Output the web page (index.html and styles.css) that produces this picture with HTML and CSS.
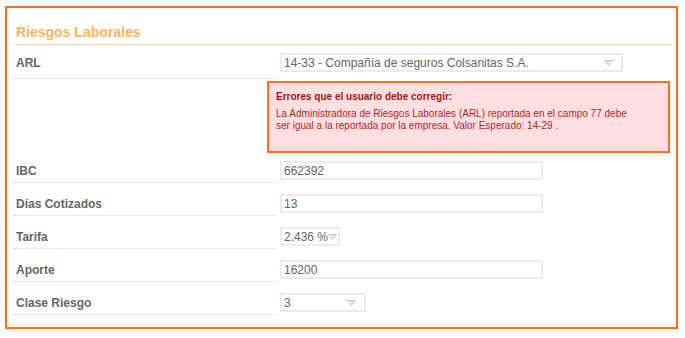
FILE: index.html
```html
<!DOCTYPE html>
<html lang="es">

<head>
  <meta charset="UTF-8">
  <meta name="viewport" content="width=device-width, initial-scale=1.0">
  <title>Riesgos Laborales</title>

  <link rel="stylesheet" href="styles.css">
</head>

<body>
  <div class="panel">
    <h2 class="panel-titulo">Riesgos Laborales</h2>

    <div class="campo campo-primero">
      <div class="etiqueta">ARL</div>
      <div class="valor">
        <div class="caja lista ancho-arl">
          <span>14-33 - Compañía de seguros Colsanitas S.A.</span>
          <svg class="flecha" width="9" height="6" viewBox="0 0 9 6"><polygon points="0.5,0.5 8.5,0.5 4.5,5.5" /></svg>
        </div>
      </div>
    </div>

    <div class="campo-error">
      <div></div>
      <div class="error">
        <div class="error-titulo">Errores que el usuario debe corregir:</div>
        <div class="error-texto">La Administradora de Riesgos Laborales (ARL) reportada en el campo 77 debe ser igual a la reportada por la empresa. Valor Esperado: 14-29 .</div>
      </div>
    </div>

    <div class="campo campo-tras-error">
      <div class="etiqueta">IBC</div>
      <div class="valor">
        <div class="caja ancho-texto">662392</div>
      </div>
    </div>

    <div class="campo">
      <div class="etiqueta">Días Cotizados</div>
      <div class="valor">
        <div class="caja ancho-texto">13</div>
      </div>
    </div>

    <div class="campo">
      <div class="etiqueta">Tarifa</div>
      <div class="valor">
        <div class="caja lista ancho-tarifa">
          <span>2.436 %</span>
          <svg class="flecha flecha-pegada" width="9" height="6" viewBox="0 0 9 6"><polygon points="0.5,0.5 8.5,0.5 4.5,5.5" /></svg>
        </div>
      </div>
    </div>

    <div class="campo">
      <div class="etiqueta">Aporte</div>
      <div class="valor">
        <div class="caja ancho-texto">16200</div>
      </div>
    </div>

    <div class="campo">
      <div class="etiqueta">Clase Riesgo</div>
      <div class="valor">
        <div class="caja lista ancho-clase">
          <span>3</span>
          <svg class="flecha" width="9" height="6" viewBox="0 0 9 6"><polygon points="0.5,0.5 8.5,0.5 4.5,5.5" /></svg>
        </div>
      </div>
    </div>
  </div>
</body>

</html>
```

FILE: styles.css
```css
body {
  font-family: 'Liberation Sans', Arial, sans-serif;
  background-color: #fff;
  margin: 0;
  padding: 6px 0 0 5px;
  color: #666;
}

.panel {
  box-sizing: border-box;
  width: 673px;
  border: 2px solid #f7711e;
  padding: 15px 4px 12px 7px;
}

.panel-titulo {
  margin: 0;
  padding: 0 2px 3px;
  font-size: 14px;
  line-height: 18px;
  font-weight: bold;
  color: #ffb45e;
  border-bottom: 1px solid #ffd9a6;
}

.campo,
.campo-error {
  display: grid;
  grid-template-columns: 262px 1fr;
  column-gap: 4px;
}

.etiqueta {
  display: flex;
  align-items: center;
  padding: 11px 2px 2px;
  height: 19px;
  font-size: 12px;
  font-weight: bold;
  color: #666;
  border-bottom: 1px dotted #d6d6d6;
}

.valor {
  display: flex;
  align-items: center;
  padding: 11px 0 3px;
}

.campo-primero .etiqueta {
  padding-top: 8px;
  padding-bottom: 6px;
}

.campo-primero .valor {
  padding-top: 8px;
  padding-bottom: 7px;
}

.campo-tras-error .etiqueta {
  padding-top: 8px;
}

.campo-tras-error .valor {
  padding-top: 8px;
}

.caja {
  box-sizing: border-box;
  display: flex;
  align-items: center;
  height: 19px;
  padding: 0 2px;
  border: 2px solid #ebebeb;
  font-size: 12px;
  color: #666;
  background-color: #fff;
}

.lista span {
  flex: 1;
  white-space: nowrap;
}

.flecha {
  flex: none;
  margin-right: 6px;
}

.flecha polygon {
  fill: #ececec;
  stroke: #c4c4c4;
  stroke-width: 1;
}

.flecha-pegada {
  margin-right: 1px;
}

.ancho-arl {
  width: 343px;
}

.ancho-texto {
  width: 263px;
}

.ancho-tarifa {
  width: 60px;
}

.ancho-clase {
  width: 86px;
}

.error {
  box-sizing: border-box;
  width: 403px;
  margin: 2px 0 0 -13px;
  padding: 8px 30px 19px 7px;
  border: 2px solid #f7711e;
  background-color: #ffdfe0;
}

.error-titulo {
  font-size: 10px;
  line-height: 12px;
  font-weight: bold;
  color: #a3161c;
}

.error-texto {
  margin-top: 5px;
  font-size: 10px;
  line-height: 12px;
  color: #b0282c;
}
```
